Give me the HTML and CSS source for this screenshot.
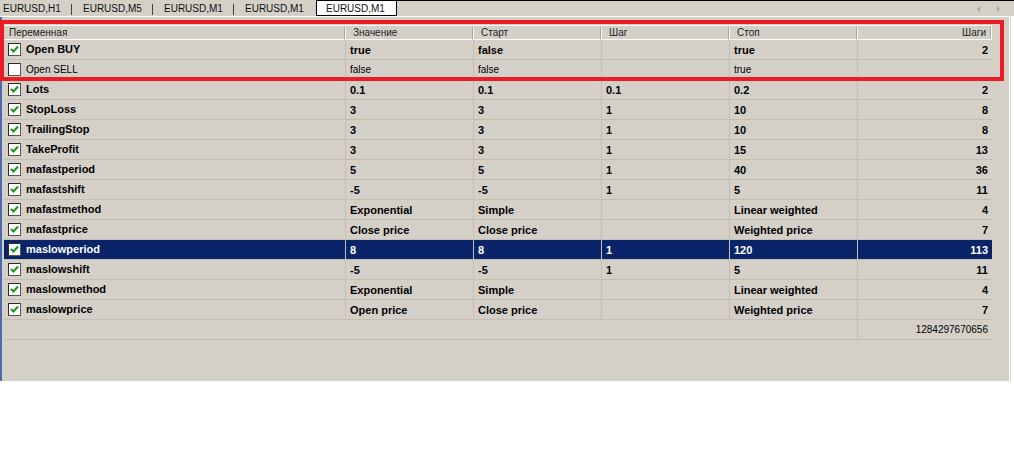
FILE: index.html
```html
<!DOCTYPE html>
<html lang="ru">
<head>
    <meta charset="UTF-8">
    <meta name="viewport" content="width=device-width, initial-scale=1.0">
    <title>Tester - Inputs</title>
    <link rel="stylesheet" href="styles.css">
</head>
<body>
    <div class="tabs">
        <div class="tab first">EURUSD,H1</div>
        <div class="tab">EURUSD,M5</div>
        <div class="tab">EURUSD,M1</div>
        <div class="tab last">EURUSD,M1</div>
        <div class="tab active">EURUSD,M1</div>
        <div class="tab-fill">
            <span class="arrow arrow-left"></span>
            <span class="arrow arrow-right"></span>
        </div>
    </div>

    <div class="panel">
        <table class="params">
            <colgroup>
                <col class="c-name">
                <col class="c-mid">
                <col class="c-mid">
                <col class="c-mid">
                <col class="c-mid">
                <col class="c-steps">
            </colgroup>
            <thead>
                <tr>
                    <th>Переменная</th>
                    <th>Значение</th>
                    <th>Старт</th>
                    <th>Шаг</th>
                    <th>Стоп</th>
                    <th class="num">Шаги</th>
                </tr>
            </thead>
            <tbody>
                <tr class="on">
                    <td><span class="check on"></span>Open BUY</td>
                    <td>true</td><td>false</td><td></td><td>true</td><td class="num">2</td>
                </tr>
                <tr>
                    <td><span class="check"></span>Open SELL</td>
                    <td>false</td><td>false</td><td></td><td>true</td><td class="num"></td>
                </tr>
                <tr class="on">
                    <td><span class="check on"></span>Lots</td>
                    <td>0.1</td><td>0.1</td><td>0.1</td><td>0.2</td><td class="num">2</td>
                </tr>
                <tr class="on">
                    <td><span class="check on"></span>StopLoss</td>
                    <td>3</td><td>3</td><td>1</td><td>10</td><td class="num">8</td>
                </tr>
                <tr class="on">
                    <td><span class="check on"></span>TrailingStop</td>
                    <td>3</td><td>3</td><td>1</td><td>10</td><td class="num">8</td>
                </tr>
                <tr class="on">
                    <td><span class="check on"></span>TakeProfit</td>
                    <td>3</td><td>3</td><td>1</td><td>15</td><td class="num">13</td>
                </tr>
                <tr class="on">
                    <td><span class="check on"></span>mafastperiod</td>
                    <td>5</td><td>5</td><td>1</td><td>40</td><td class="num">36</td>
                </tr>
                <tr class="on">
                    <td><span class="check on"></span>mafastshift</td>
                    <td>-5</td><td>-5</td><td>1</td><td>5</td><td class="num">11</td>
                </tr>
                <tr class="on">
                    <td><span class="check on"></span>mafastmethod</td>
                    <td>Exponential</td><td>Simple</td><td></td><td>Linear weighted</td><td class="num">4</td>
                </tr>
                <tr class="on">
                    <td><span class="check on"></span>mafastprice</td>
                    <td>Close price</td><td>Close price</td><td></td><td>Weighted price</td><td class="num">7</td>
                </tr>
                <tr class="on selected">
                    <td><span class="check on"></span>maslowperiod</td>
                    <td>8</td><td>8</td><td>1</td><td>120</td><td class="num">113</td>
                </tr>
                <tr class="on">
                    <td><span class="check on"></span>maslowshift</td>
                    <td>-5</td><td>-5</td><td>1</td><td>5</td><td class="num">11</td>
                </tr>
                <tr class="on">
                    <td><span class="check on"></span>maslowmethod</td>
                    <td>Exponential</td><td>Simple</td><td></td><td>Linear weighted</td><td class="num">4</td>
                </tr>
                <tr class="on">
                    <td><span class="check on"></span>maslowprice</td>
                    <td>Open price</td><td>Close price</td><td></td><td>Weighted price</td><td class="num">7</td>
                </tr>
                <tr class="total">
                    <td colspan="5"></td>
                    <td class="num">1284297670656</td>
                </tr>
            </tbody>
        </table>
    </div>

    <!-- рамка-выделение поверх первых строк -->
    <div class="highlight"></div>
</body>
</html>
```

FILE: styles.css
```css
body {
    margin: 0;
    background-color: #ffffff;
    font-family: "Liberation Sans", Arial, sans-serif;
    font-size: 10px;
    color: #000000;
    position: relative;
}

/* вкладки графиков */
.tabs {
    display: flex;
    height: 16px;
    background-color: #d4d0c8;
    border-bottom: 1px solid #ffffff;
}
.tab {
    box-sizing: border-box;
    width: 81px;
    height: 16px;
    line-height: 16px;
    padding-left: 10px;
    padding-top: 1px;
    color: #111111;
    white-space: nowrap;
}
.tab.first {
    width: 73px;
    padding-left: 3px;
}
.tab.first, .tab:nth-child(2), .tab:nth-child(3) {
    border-right: 1px solid transparent;
    background-image: linear-gradient(#404040, #404040);
    background-size: 1px 11px;
    background-position: right 4px;
    background-repeat: no-repeat;
}
.tab.active {
    padding-left: 9px;
    padding-top: 0;
    background-color: #ffffff;
    border: 1px solid #000000;
}
.tab-fill {
    flex: 1;
    display: flex;
    justify-content: flex-end;
    align-items: center;
    gap: 17px;
    padding-right: 14px;
    border-top: 1px solid #000000;
}
.arrow {
    width: 0;
    height: 0;
    border-top: 3px solid transparent;
    border-bottom: 3px solid transparent;
}
.arrow-left {
    border-right: 3px solid #aaa69e;
}
.arrow-right {
    border-left: 3px solid #aaa69e;
}

/* панель со списком параметров */
.panel {
    box-sizing: border-box;
    width: 1011px;
    height: 364px;
    padding: 8px 0 0 2px;
    background-color: #d4d0c8;
    border-left: 2px solid #4a6aae;
    box-shadow: inset -1px 0 #d4d0c8, inset -2px 0 #ffffff;
}
.params {
    table-layout: fixed;
    width: 988px;
    border-collapse: separate;
    border-spacing: 0;
}
.c-name { width: 342px; }
.c-mid { width: 128px; }
.c-steps { width: 134px; }

.params th {
    box-sizing: border-box;
    height: 15px;
    padding: 0 0 0 7px;
    font-weight: normal;
    text-align: left;
    color: #202020;
    border-top: 1px solid #ffffff;
    border-bottom: 1px solid #ffffff;
    border-right: 1px solid #ffffff;
    box-shadow: inset -1px 0 #a8a49c;
    white-space: nowrap;
}
.params th:first-child {
    padding-left: 5px;
}
.params th.num {
    text-align: right;
    padding-right: 5px;
}
.params td {
    box-sizing: border-box;
    height: 20px;
    padding: 0 0 0 4px;
    border-bottom: 1px solid #c3bfb7;
    border-right: 1px solid #c3bfb7;
    white-space: nowrap;
    overflow: hidden;
}
.params td.num {
    text-align: right;
    padding-right: 4px;
    border-right: none;
}
.params tr.on td {
    font-size: 11px;
    font-weight: bold;
}
.params tr.selected td {
    background-color: #0a246a;
    color: #ffffff;
}
.params tr.total td {
    font-size: 10px;
}

/* чекбоксы */
.check {
    display: inline-block;
    box-sizing: border-box;
    width: 13px;
    height: 13px;
    margin-right: 5px;
    vertical-align: -3px;
    background-color: #ffffff;
    border: 1px solid #2a2a2a;
    border-right-color: #555555;
    border-bottom-color: #555555;
}
.check.on {
    background-image: url("data:image/svg+xml,%3Csvg xmlns='http://www.w3.org/2000/svg' width='11' height='11'%3E%3Cpath d='M2 5 L4.5 7.5 L9 2.5' fill='none' stroke='%231e9a1e' stroke-width='2.2'/%3E%3C/svg%3E");
    background-repeat: no-repeat;
}

/* красная рамка */
.highlight {
    position: absolute;
    left: 0;
    top: 20px;
    width: 1004px;
    height: 61px;
    box-sizing: border-box;
    border: 4px solid #ed1c24;
}
```
